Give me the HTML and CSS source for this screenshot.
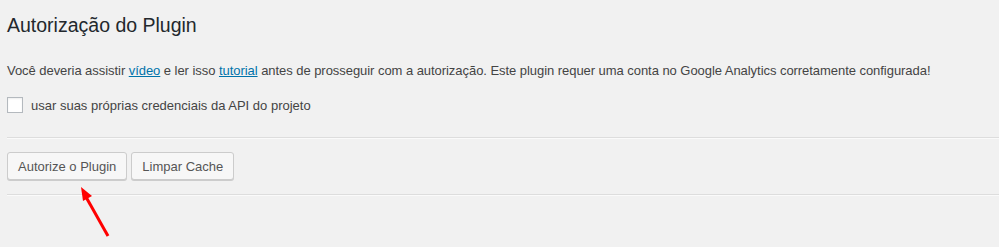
FILE: index.html
```html
<!DOCTYPE html>
<html>
	<head>
		<meta charset="utf-8">
		<title>Autorização do Plugin</title>
	<link rel="stylesheet" href="styles.css">
	</head>
	<body>
	<div class="wrap">
		<h1 class="title">Autorização do Plugin</h1>
		<p class="info">Você deveria assistir <a href="javascript:;">vídeo</a> e ler isso <a href="javascript:;">tutorial</a> antes de prosseguir com a autorização. Este plugin requer uma conta no Google Analytics corretamente configurada!</p>
		<label class="own"><input type="checkbox" class="check"/>usar suas próprias credenciais da API do projeto</label>
		<hr class="line"/>
		<div class="actions">
			<button class="button">Autorize o Plugin</button>
			<button class="button">Limpar Cache</button>
		</div>
		<hr class="line"/>
		<!-- seta vermelha -->
		<svg class="arrow" width="40" height="60" viewBox="0 0 40 60">
			<line x1="31" y1="52" x2="9" y2="13" stroke="#ff0000" stroke-width="3"/>
			<polygon points="4,3 15,12 6,17" fill="#ff0000"/>
		</svg>
	</div>
	</body>
</html>
```
FILE: styles.css
```css
html,body{
	margin: 0;
	padding: 0;
	background-color: #f1f1f1;
}
.wrap{
	position: relative;
	padding: 0 0 0 7px;
	height: 247px;
	font-family: "Liberation Sans", Arial, sans-serif;
	font-size: 13px;
	color: #444;
}
.title{
	margin: 0;
	padding-top: 11px;
	font-size: 19.5px;
	font-weight: 400;
	line-height: 28px;
	color: #23282d;
}
.info{
	margin: 22px 0 0 0;
	line-height: 20px;
	letter-spacing: -0.05px;
}
.info a{
	color: #0073aa;
}
.own{
	display: flex;
	align-items: center;
	margin-top: 15px;
	height: 18px;
}
.check{
	width: 16px;
	height: 16px;
	margin: 0 8px 0 0;
	appearance: none;
	border: 1px solid #b4b9be;
	background-color: #fff;
	box-shadow: inset 0 1px 2px rgba(0,0,0,.07);
}
.line{
	margin: 23px 0 0 0;
	height: 0;
	border: 0;
	border-top: 1px solid #ddd;
	border-bottom: 1px solid #fafafa;
}
.actions{
	display: flex;
	gap: 4px;
	padding: 13px 0 14px 0;
}
.actions + .line{
	margin-top: 0;
}
.button{
	height: 28px;
	padding: 0 10px;
	font-family: "Liberation Sans", Arial, sans-serif;
	font-size: 13px;
	color: #555;
	background-color: #f7f7f7;
	border: 1px solid #ccc;
	border-radius: 3px;
	box-shadow: 0 1px 0 #ccc;
}
.arrow{
	position: absolute;
	left: 77px;
	top: 184px;
}
```
